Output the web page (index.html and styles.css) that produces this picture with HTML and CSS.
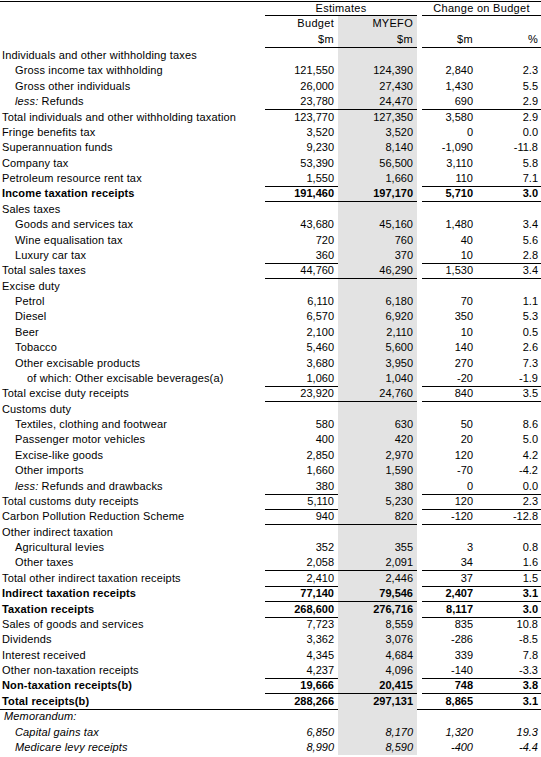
FILE: index.html
```html
<!DOCTYPE html>
<html lang="en">
<head>
  <meta charset="UTF-8">
  <title>Receipts estimates</title>
  <link rel="stylesheet" href="styles.css">
</head>
<body>
  <div class="sheet">
    <div class="row head h1 ul">
      <div class="lbl"></div>
      <div class="span2 c">Estimates</div>
      <div class="gap"></div>
      <div class="span2 c">Change on Budget</div>
    </div>
    <div class="row head">
      <div class="lbl"></div>
      <div class="n">Budget</div>
      <div class="n my">MYEFO</div>
      <div class="gap"></div>
      <div class="n"></div>
      <div class="n pc"></div>
    </div>
    <div class="row head ul">
      <div class="lbl"></div>
      <div class="n">$m</div>
      <div class="n my">$m</div>
      <div class="gap"></div>
      <div class="n">$m</div>
      <div class="n pc">%</div>
    </div>

    <div class="row"><div class="lbl">Individuals and other withholding taxes</div><div class="n"></div><div class="n my"></div><div class="gap"></div><div class="n"></div><div class="n pc"></div></div>
    <div class="row"><div class="lbl i1">Gross income tax withholding</div><div class="n">121,550</div><div class="n my">124,390</div><div class="gap"></div><div class="n">2,840</div><div class="n pc">2.3</div></div>
    <div class="row"><div class="lbl i1">Gross other individuals</div><div class="n">26,000</div><div class="n my">27,430</div><div class="gap"></div><div class="n">1,430</div><div class="n pc">5.5</div></div>
    <div class="row ul"><div class="lbl i1"><em>less:</em> Refunds</div><div class="n">23,780</div><div class="n my">24,470</div><div class="gap"></div><div class="n">690</div><div class="n pc">2.9</div></div>
    <div class="row"><div class="lbl">Total individuals and other withholding taxation</div><div class="n">123,770</div><div class="n my">127,350</div><div class="gap"></div><div class="n">3,580</div><div class="n pc">2.9</div></div>
    <div class="row"><div class="lbl">Fringe benefits tax</div><div class="n">3,520</div><div class="n my">3,520</div><div class="gap"></div><div class="n">0</div><div class="n pc">0.0</div></div>
    <div class="row"><div class="lbl">Superannuation funds</div><div class="n">9,230</div><div class="n my">8,140</div><div class="gap"></div><div class="n">-1,090</div><div class="n pc">-11.8</div></div>
    <div class="row"><div class="lbl">Company tax</div><div class="n">53,390</div><div class="n my">56,500</div><div class="gap"></div><div class="n">3,110</div><div class="n pc">5.8</div></div>
    <div class="row ul"><div class="lbl">Petroleum resource rent tax</div><div class="n">1,550</div><div class="n my">1,660</div><div class="gap"></div><div class="n">110</div><div class="n pc">7.1</div></div>
    <div class="row ul bold"><div class="lbl">Income taxation receipts</div><div class="n">191,460</div><div class="n my">197,170</div><div class="gap"></div><div class="n">5,710</div><div class="n pc">3.0</div></div>

    <div class="row"><div class="lbl">Sales taxes</div><div class="n"></div><div class="n my"></div><div class="gap"></div><div class="n"></div><div class="n pc"></div></div>
    <div class="row"><div class="lbl i1">Goods and services tax</div><div class="n">43,680</div><div class="n my">45,160</div><div class="gap"></div><div class="n">1,480</div><div class="n pc">3.4</div></div>
    <div class="row"><div class="lbl i1">Wine equalisation tax</div><div class="n">720</div><div class="n my">760</div><div class="gap"></div><div class="n">40</div><div class="n pc">5.6</div></div>
    <div class="row ul"><div class="lbl i1">Luxury car tax</div><div class="n">360</div><div class="n my">370</div><div class="gap"></div><div class="n">10</div><div class="n pc">2.8</div></div>
    <div class="row ul"><div class="lbl">Total sales taxes</div><div class="n">44,760</div><div class="n my">46,290</div><div class="gap"></div><div class="n">1,530</div><div class="n pc">3.4</div></div>

    <div class="row"><div class="lbl">Excise duty</div><div class="n"></div><div class="n my"></div><div class="gap"></div><div class="n"></div><div class="n pc"></div></div>
    <div class="row"><div class="lbl i1">Petrol</div><div class="n">6,110</div><div class="n my">6,180</div><div class="gap"></div><div class="n">70</div><div class="n pc">1.1</div></div>
    <div class="row"><div class="lbl i1">Diesel</div><div class="n">6,570</div><div class="n my">6,920</div><div class="gap"></div><div class="n">350</div><div class="n pc">5.3</div></div>
    <div class="row"><div class="lbl i1">Beer</div><div class="n">2,100</div><div class="n my">2,110</div><div class="gap"></div><div class="n">10</div><div class="n pc">0.5</div></div>
    <div class="row"><div class="lbl i1">Tobacco</div><div class="n">5,460</div><div class="n my">5,600</div><div class="gap"></div><div class="n">140</div><div class="n pc">2.6</div></div>
    <div class="row"><div class="lbl i1">Other excisable products</div><div class="n">3,680</div><div class="n my">3,950</div><div class="gap"></div><div class="n">270</div><div class="n pc">7.3</div></div>
    <div class="row ul"><div class="lbl i2">of which: Other excisable beverages(a)</div><div class="n">1,060</div><div class="n my">1,040</div><div class="gap"></div><div class="n">-20</div><div class="n pc">-1.9</div></div>
    <div class="row ul"><div class="lbl">Total excise duty receipts</div><div class="n">23,920</div><div class="n my">24,760</div><div class="gap"></div><div class="n">840</div><div class="n pc">3.5</div></div>

    <div class="row"><div class="lbl">Customs duty</div><div class="n"></div><div class="n my"></div><div class="gap"></div><div class="n"></div><div class="n pc"></div></div>
    <div class="row"><div class="lbl i1">Textiles, clothing and footwear</div><div class="n">580</div><div class="n my">630</div><div class="gap"></div><div class="n">50</div><div class="n pc">8.6</div></div>
    <div class="row"><div class="lbl i1">Passenger motor vehicles</div><div class="n">400</div><div class="n my">420</div><div class="gap"></div><div class="n">20</div><div class="n pc">5.0</div></div>
    <div class="row"><div class="lbl i1">Excise-like goods</div><div class="n">2,850</div><div class="n my">2,970</div><div class="gap"></div><div class="n">120</div><div class="n pc">4.2</div></div>
    <div class="row"><div class="lbl i1">Other imports</div><div class="n">1,660</div><div class="n my">1,590</div><div class="gap"></div><div class="n">-70</div><div class="n pc">-4.2</div></div>
    <div class="row ul"><div class="lbl i1"><em>less:</em> Refunds and drawbacks</div><div class="n">380</div><div class="n my">380</div><div class="gap"></div><div class="n">0</div><div class="n pc">0.0</div></div>
    <div class="row ul"><div class="lbl">Total customs duty receipts</div><div class="n">5,110</div><div class="n my">5,230</div><div class="gap"></div><div class="n">120</div><div class="n pc">2.3</div></div>
    <div class="row ul"><div class="lbl">Carbon Pollution Reduction Scheme</div><div class="n">940</div><div class="n my">820</div><div class="gap"></div><div class="n">-120</div><div class="n pc">-12.8</div></div>

    <div class="row"><div class="lbl">Other indirect taxation</div><div class="n"></div><div class="n my"></div><div class="gap"></div><div class="n"></div><div class="n pc"></div></div>
    <div class="row"><div class="lbl i1">Agricultural levies</div><div class="n">352</div><div class="n my">355</div><div class="gap"></div><div class="n">3</div><div class="n pc">0.8</div></div>
    <div class="row ul"><div class="lbl i1">Other taxes</div><div class="n">2,058</div><div class="n my">2,091</div><div class="gap"></div><div class="n">34</div><div class="n pc">1.6</div></div>
    <div class="row ul"><div class="lbl">Total other indirect taxation receipts</div><div class="n">2,410</div><div class="n my">2,446</div><div class="gap"></div><div class="n">37</div><div class="n pc">1.5</div></div>
    <div class="row ul bold"><div class="lbl">Indirect taxation receipts</div><div class="n">77,140</div><div class="n my">79,546</div><div class="gap"></div><div class="n">2,407</div><div class="n pc">3.1</div></div>
    <div class="row ul bold"><div class="lbl">Taxation receipts</div><div class="n">268,600</div><div class="n my">276,716</div><div class="gap"></div><div class="n">8,117</div><div class="n pc">3.0</div></div>

    <div class="row"><div class="lbl">Sales of goods and services</div><div class="n">7,723</div><div class="n my">8,559</div><div class="gap"></div><div class="n">835</div><div class="n pc">10.8</div></div>
    <div class="row"><div class="lbl">Dividends</div><div class="n">3,362</div><div class="n my">3,076</div><div class="gap"></div><div class="n">-286</div><div class="n pc">-8.5</div></div>
    <div class="row"><div class="lbl">Interest received</div><div class="n">4,345</div><div class="n my">4,684</div><div class="gap"></div><div class="n">339</div><div class="n pc">7.8</div></div>
    <div class="row ul"><div class="lbl">Other non-taxation receipts</div><div class="n">4,237</div><div class="n my">4,096</div><div class="gap"></div><div class="n">-140</div><div class="n pc">-3.3</div></div>
    <div class="row ul bold"><div class="lbl">Non-taxation receipts(b)</div><div class="n">19,666</div><div class="n my">20,415</div><div class="gap"></div><div class="n">748</div><div class="n pc">3.8</div></div>
    <div class="row rule bold"><div class="lbl">Total receipts(b)</div><div class="n">288,266</div><div class="n my">297,131</div><div class="gap"></div><div class="n">8,865</div><div class="n pc">3.1</div></div>

    <div class="row memo"><div class="lbl">Memorandum:</div><div class="n"></div><div class="n my"></div><div class="gap"></div><div class="n"></div><div class="n pc"></div></div>
    <div class="row memo"><div class="lbl i1">Capital gains tax</div><div class="n">6,850</div><div class="n my">8,170</div><div class="gap"></div><div class="n">1,320</div><div class="n pc">19.3</div></div>
    <div class="row memo rule"><div class="lbl i1">Medicare levy receipts</div><div class="n">8,990</div><div class="n my">8,590</div><div class="gap"></div><div class="n">-400</div><div class="n pc">-4.4</div></div>
  </div>
</body>
</html>
```

FILE: styles.css
```css
html, body {
  margin: 0;
  padding: 0;
  background: #fff;
}
body {
  font-family: "Liberation Sans", Arial, sans-serif;
  font-size: 11px;
  color: #000;
}
.sheet {
  width: 541px;
  margin-top: 1px;
  border-top: 1px solid #000;
}
.row {
  display: grid;
  grid-template-columns: 265px 73px 79px 5px 55px 64px;
  height: 15.39px;
  line-height: 15px;
}
.row > div {
  box-sizing: border-box;
  white-space: nowrap;
  overflow: visible;
}
.row.head {
  height: 16px;
  letter-spacing: 0.3px;
}
.row.head.h1 {
  height: 14px;
  line-height: 13px;
}
.span2 {
  grid-column: span 2;
}
.c {
  text-align: center;
}
.lbl {
  padding-left: 2px;
  letter-spacing: 0.15px;
}
.lbl.i1 {
  padding-left: 15px;
}
.lbl.i2 {
  padding-left: 27px;
}
.n {
  text-align: right;
  padding-right: 4px;
}
.n.pc {
  padding-right: 3px;
}
.my {
  background: #e3e3e3;
}
.row.ul > div:not(.lbl):not(.gap) {
  border-bottom: 1px solid #000;
}
.row.rule > div {
  border-bottom: 1px solid #000;
}
.bold {
  font-weight: bold;
}
.memo {
  font-style: italic;
}
.memo .lbl {
  padding-left: 4px;
}
.memo .lbl.i1 {
  padding-left: 15px;
}
```
